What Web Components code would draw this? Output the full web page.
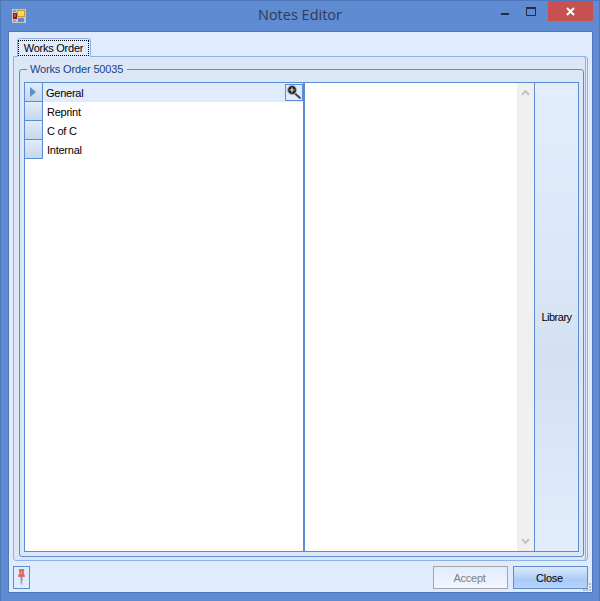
<!DOCTYPE html>
<html>
<head>
<meta charset="utf-8">
<title>Notes Editor</title>
<style>
  html, body { margin: 0; padding: 0; background: #5f8bd3; }
  body { font: 11px "Liberation Sans", Arial, sans-serif; letter-spacing: -0.25px; color: #000; }
</style>
</head>
<body>
<notes-window caption="Notes Editor">
  <tab-page label="Works Order">
    <group-box label="Works Order 50035">
      <split-view>
        <note-grid slot="left">
          <note-row selected zoom>General</note-row>
          <note-row>Reprint</note-row>
          <note-row>C of C</note-row>
          <note-row>Internal</note-row>
        </note-grid>
        <text-pane slot="middle"></text-pane>
        <side-button slot="right">Library</side-button>
      </split-view>
    </group-box>
  </tab-page>
  <flat-button slot="footer" disabled>Accept</flat-button>
  <flat-button slot="footer" hot>Close</flat-button>
</notes-window>

<script>
function define(name, html, attrs) {
  const template = document.createElement('template');
  template.innerHTML = html;
  customElements.define(name, class extends HTMLElement {
    constructor() {
      super();
      this.attachShadow({ mode: 'open' });
      this.shadowRoot.appendChild(document.importNode(template.content, true));
    }
    connectedCallback() {
      (attrs || []).forEach(a => {
        let el = this.shadowRoot.querySelector('[data-' + a + ']');
        if(el) el.textContent = this.getAttribute(a === 'title' ? 'caption' : a);
      });
    }
  });
}

define('notes-window', /* html */ `
  <style>
    :host {
      display: flex;
      flex-direction: column;
      box-sizing: border-box;
      width: 600px;
      height: 601px;
      background: #5f8bd3;
      border: 1px solid #4f78b8;
      border-bottom: 0;
    }
    #bar { display: flex; height: 30px; flex: none; position: relative; }
    #icon { margin: 7px 0 0 10px; flex: none; }
    #caption {
      position: absolute; left: 0; right: 0; top: 4px; text-align: center; letter-spacing: 0;
      font: 14.5px/20px "Open Sans", "Liberation Sans", sans-serif; color: #2f3b52;
    }
    #ctl { margin-left: auto; display: flex; align-items: flex-start; margin-right: 6px; }
    .c { width: 26px; height: 20px; display: flex; align-items: center; justify-content: center; }
    #close { width: 45px; background: #c75050; margin-left: 4px; }
    #client {
      flex: 1; display: flex; flex-direction: column; min-height: 0;
      margin: 0 6px 8px 7px;
      background: #e0ecfe;
      border: 1px solid #4f78b8;
      position: relative;
    }
    #foot {
      flex: none; height: 23px; margin: 5px 4px 3px 4px;
      display: flex; align-items: stretch; gap: 5px;
    }
    #pin {
      box-sizing: border-box; width: 17px; margin-right: auto;
      border: 1px solid #5b8dd3; display: flex; align-items: center; justify-content: center;
    }
    #grip { position: absolute; right: 0; bottom: 0; }
  </style>
  <div id="bar">
    <svg id="icon" width="16" height="16" viewBox="0 0 16 16">
      <rect x="1" y="1" width="14" height="14" fill="#c4c8cc"/>
      <rect x="2" y="2" width="3" height="2" fill="#7f9ac4"/>
      <rect x="6" y="2" width="8" height="7" fill="#c89a1c"/>
      <rect x="7" y="3" width="6" height="5" fill="#f8d860"/>
      <rect x="2" y="5" width="4" height="6" fill="#8c1a10"/>
      <rect x="3" y="6" width="2" height="3" fill="#e04030"/>
      <rect x="7" y="10" width="6" height="4" fill="#5c86dc"/>
      <rect x="2" y="12" width="3" height="2" fill="#8fa6c8"/>
    </svg>
    <div id="caption" data-title></div>
    <div id="ctl">
      <div class="c"><svg width="9" height="9" viewBox="0 0 9 9"><rect y="6" width="8" height="2" fill="#222c3c"/></svg></div>
      <div class="c"><svg width="10" height="9" viewBox="0 0 10 9"><path d="M.5.5h9v8h-9z M1 1.500h8" fill="none" stroke="#222c3c"/><rect y="0" width="10" height="2" fill="#222c3c"/></svg></div>
      <div class="c" id="close"><svg width="9" height="9" viewBox="0 0 9 9"><path d="M1 1l7 7M8 1l-7 7" stroke="#fff" stroke-width="2"/></svg></div>
    </div>
  </div>
  <div id="client">
    <slot></slot>
    <div id="foot">
      <div id="pin">
        <svg width="11" height="19" viewBox="0 0 11 19">
          <defs>
            <linearGradient id="needle" x1="0" y1="0" x2="0" y2="1">
              <stop offset="0" stop-color="#7f8790"/>
              <stop offset=".7" stop-color="#a4aebc"/>
              <stop offset="1" stop-color="#c6d6ee"/>
            </linearGradient>
          </defs>
          <path d="M3 1.500h5v1l-.7.5v3l1.200 1.500v1h-6v-1L3.700 6V3L3 2.500z" fill="#e4605c" stroke="#c9504e" stroke-width=".6"/>
          <rect x="4.700" y="3" width="1" height="3.500" fill="#f4b0ac"/>
          <rect x="4.500" y="9" width="2" height="8" fill="url(#needle)"/>
        </svg>
      </div>
      <slot name="footer"></slot>
    </div>
    <svg id="grip" width="10" height="10" viewBox="0 0 10 10" fill="#b4bcc8">
      <rect x="7" y="1" width="2" height="2"/>
      <rect x="4" y="4" width="2" height="2"/><rect x="7" y="4" width="2" height="2"/>
      <rect x="1" y="7" width="2" height="2"/><rect x="4" y="7" width="2" height="2"/><rect x="7" y="7" width="2" height="2"/>
    </svg>
  </div>
`, ['title']);

define('tab-page', /* html */ `
  <style>
    :host { display: flex; flex-direction: column; flex: 1; min-height: 0; padding: 6px 4px 0 4px; }
    #strip { display: flex; height: 19px; flex: none; padding-left: 4px; position: relative; z-index: 1; margin-bottom: -1px; }
    #tab {
      box-sizing: border-box; width: 74px; height: 19px; padding: 1px 1px 0 0;
      background: #e0ecfe;
      border: 1px solid #8fb2e6; border-bottom: 0; border-radius: 3px 3px 0 0;
    }
    #label {
      box-sizing: border-box; height: 16px; line-height: 15px; text-align: center; white-space: nowrap;
      border: 1px dotted #000;
    }
    #body {
      flex: 1; display: flex; min-height: 0; box-sizing: border-box;
      background: #dce7f5;
      border: 1px solid #8fb2e6;
      box-shadow: inset -1px 0 0 #e0ecfe, inset -2px 0 0 #8fb2e6;
      border-radius: 0 3px 3px 3px;
      padding: 5px 3px 3px 5px;
    }
  </style>
  <div id="strip"><div id="tab"><div id="label" data-label></div></div></div>
  <div id="body"><slot></slot></div>
`, ['label']);

define('group-box', /* html */ `
  <style>
    :host { display: flex; flex: 1; min-width: 0; position: relative; padding-top: 7px; }
    #frame {
      flex: 1; display: flex; min-width: 0; box-sizing: border-box;
      border: 1px solid #5b8dd3; border-radius: 3px;
      padding: 12px 4px 4px 4px;
    }
    #legend {
      position: absolute; left: 8px; top: 0; padding: 0 4px 0 3px; letter-spacing: -0.15px;
      background: #dce7f5; color: #15428b; line-height: 14px; white-space: nowrap;
    }
  </style>
  <div id="frame"><slot></slot></div>
  <div id="legend" data-label></div>
`, ['label']);

define('split-view', /* html */ `
  <style>
    :host {
      display: flex; flex: 1; min-width: 0; box-sizing: border-box;
      border: 1px solid #5b8dd3; background: #fff;
    }
    #left { flex: none; width: 278px; display: flex; }
    #split { flex: none; width: 2px; background: #5b8dd3; }
    #middle { flex: 1; display: flex; min-width: 0; }
    #right { flex: none; width: 43px; display: flex; border-left: 1px solid #5b8dd3; }
  </style>
  <div id="left"><slot name="left"></slot></div>
  <div id="split"></div>
  <div id="middle"><slot name="middle"></slot></div>
  <div id="right"><slot name="right"></slot></div>
`);

define('note-grid', /* html */ `
  <style>
    :host { display: flex; flex-direction: column; flex: 1; min-width: 0; }
  </style>
  <slot></slot>
`);

class NoteRow extends HTMLElement {
  constructor() {
    super();
    this.attachShadow({ mode: 'open' });
    this.shadowRoot.innerHTML = /* html */ `
      <style>
        :host { display: flex; height: 19px; flex: none; }
        #head {
          box-sizing: border-box; flex: none; width: 18px; height: 19px;
          border-right: 1px solid #5b8dd3; border-bottom: 1px solid #5b8dd3;
          background: linear-gradient(#e2ecf9, #c6d6ec);
          display: flex; align-items: center; padding-left: 5px;
        }
        #cell { flex: 1; display: flex; align-items: center; padding: 1px 0 0 4px; min-width: 0; position: relative; }
        :host([selected]) #cell { background: #e0ecfd; padding-left: 3px; }
        #zoom {
          position: absolute; right: 0; top: 1px; box-sizing: border-box;
          width: 18px; height: 17px; border: 1px solid #5b8dd3;
        }
      </style>
      <div id="head"></div>
      <div id="cell"><slot></slot></div>
    `;
  }

  connectedCallback() {
    if(this.hasAttribute('selected')) {
      this.shadowRoot.querySelector('#head').innerHTML =
        '<svg width="6" height="10" viewBox="0 0 6 10"><path d="M0 0l6 5-6 5z" fill="#5b8dd3"/></svg>';
    }
    if(this.hasAttribute('zoom')) {
      let z = document.createElement('div');
      z.id = 'zoom';
      z.innerHTML = '<svg width="16" height="15" viewBox="0 0 16 15" style="display:block">' +
        '<path d="M9 8.500l5.500 5" stroke="#444" stroke-width="2"/>' +
        '<circle cx="6" cy="5" r="4.500" fill="#1c1c1c" stroke="#b0b4b8" stroke-width="1.200"/>' +
        '<path d="M3.500 5h5M6 2.500v5" stroke="#e8e8e8" stroke-width="1.200"/></svg>';
      this.shadowRoot.querySelector('#cell').appendChild(z);
    }
  }
}
customElements.define('note-row', NoteRow);

define('text-pane', /* html */ `
  <style>
    :host { display: flex; flex: 1; min-width: 0; background: #fff; }
    #text { flex: 1; }
    #bar {
      flex: none; width: 17px; background: #f0f0f0;
      display: flex; flex-direction: column; justify-content: space-between; align-items: center;
      padding: 6px 0; box-sizing: border-box;
    }
  </style>
  <div id="text"></div>
  <div id="bar">
    <svg width="9" height="7" viewBox="0 0 9 7"><path d="M1 6l3.500-4L8 6" fill="none" stroke="#c4c4c4" stroke-width="2"/></svg>
    <svg width="9" height="7" viewBox="0 0 9 7"><path d="M1 1l3.500 4L8 1" fill="none" stroke="#c4c4c4" stroke-width="2"/></svg>
  </div>
`);

define('side-button', /* html */ `
  <style>
    :host {
      display: flex; flex: 1; align-items: center; justify-content: center; letter-spacing: -0.5px;
      background: linear-gradient(#e2eefe 0%, #d9e6f7 45%, #d2e0f1 58%, #e2eefe 100%);
    }
  </style>
  <slot></slot>
`);

define('flat-button', /* html */ `
  <style>
    :host {
      display: flex; box-sizing: border-box; width: 75px; align-items: center; justify-content: center;
      padding-right: 2px;
      border: 1px solid #5b8dd3;
      background: linear-gradient(#eaf2fe, #d8e6fa 50%, #e4eefe);
    }
    :host([disabled]) {
      border-color: #a6a6a6; color: #808080;
      background: linear-gradient(#e0ecfe, #f2f6fe);
    }
    :host([hot]) { background: linear-gradient(#dbe8fb 0%, #cadffa 25%, #a8cbf7 60%, #b8d4f8 100%); }
  </style>
  <slot></slot>
`);
</script>
</body>
</html>
